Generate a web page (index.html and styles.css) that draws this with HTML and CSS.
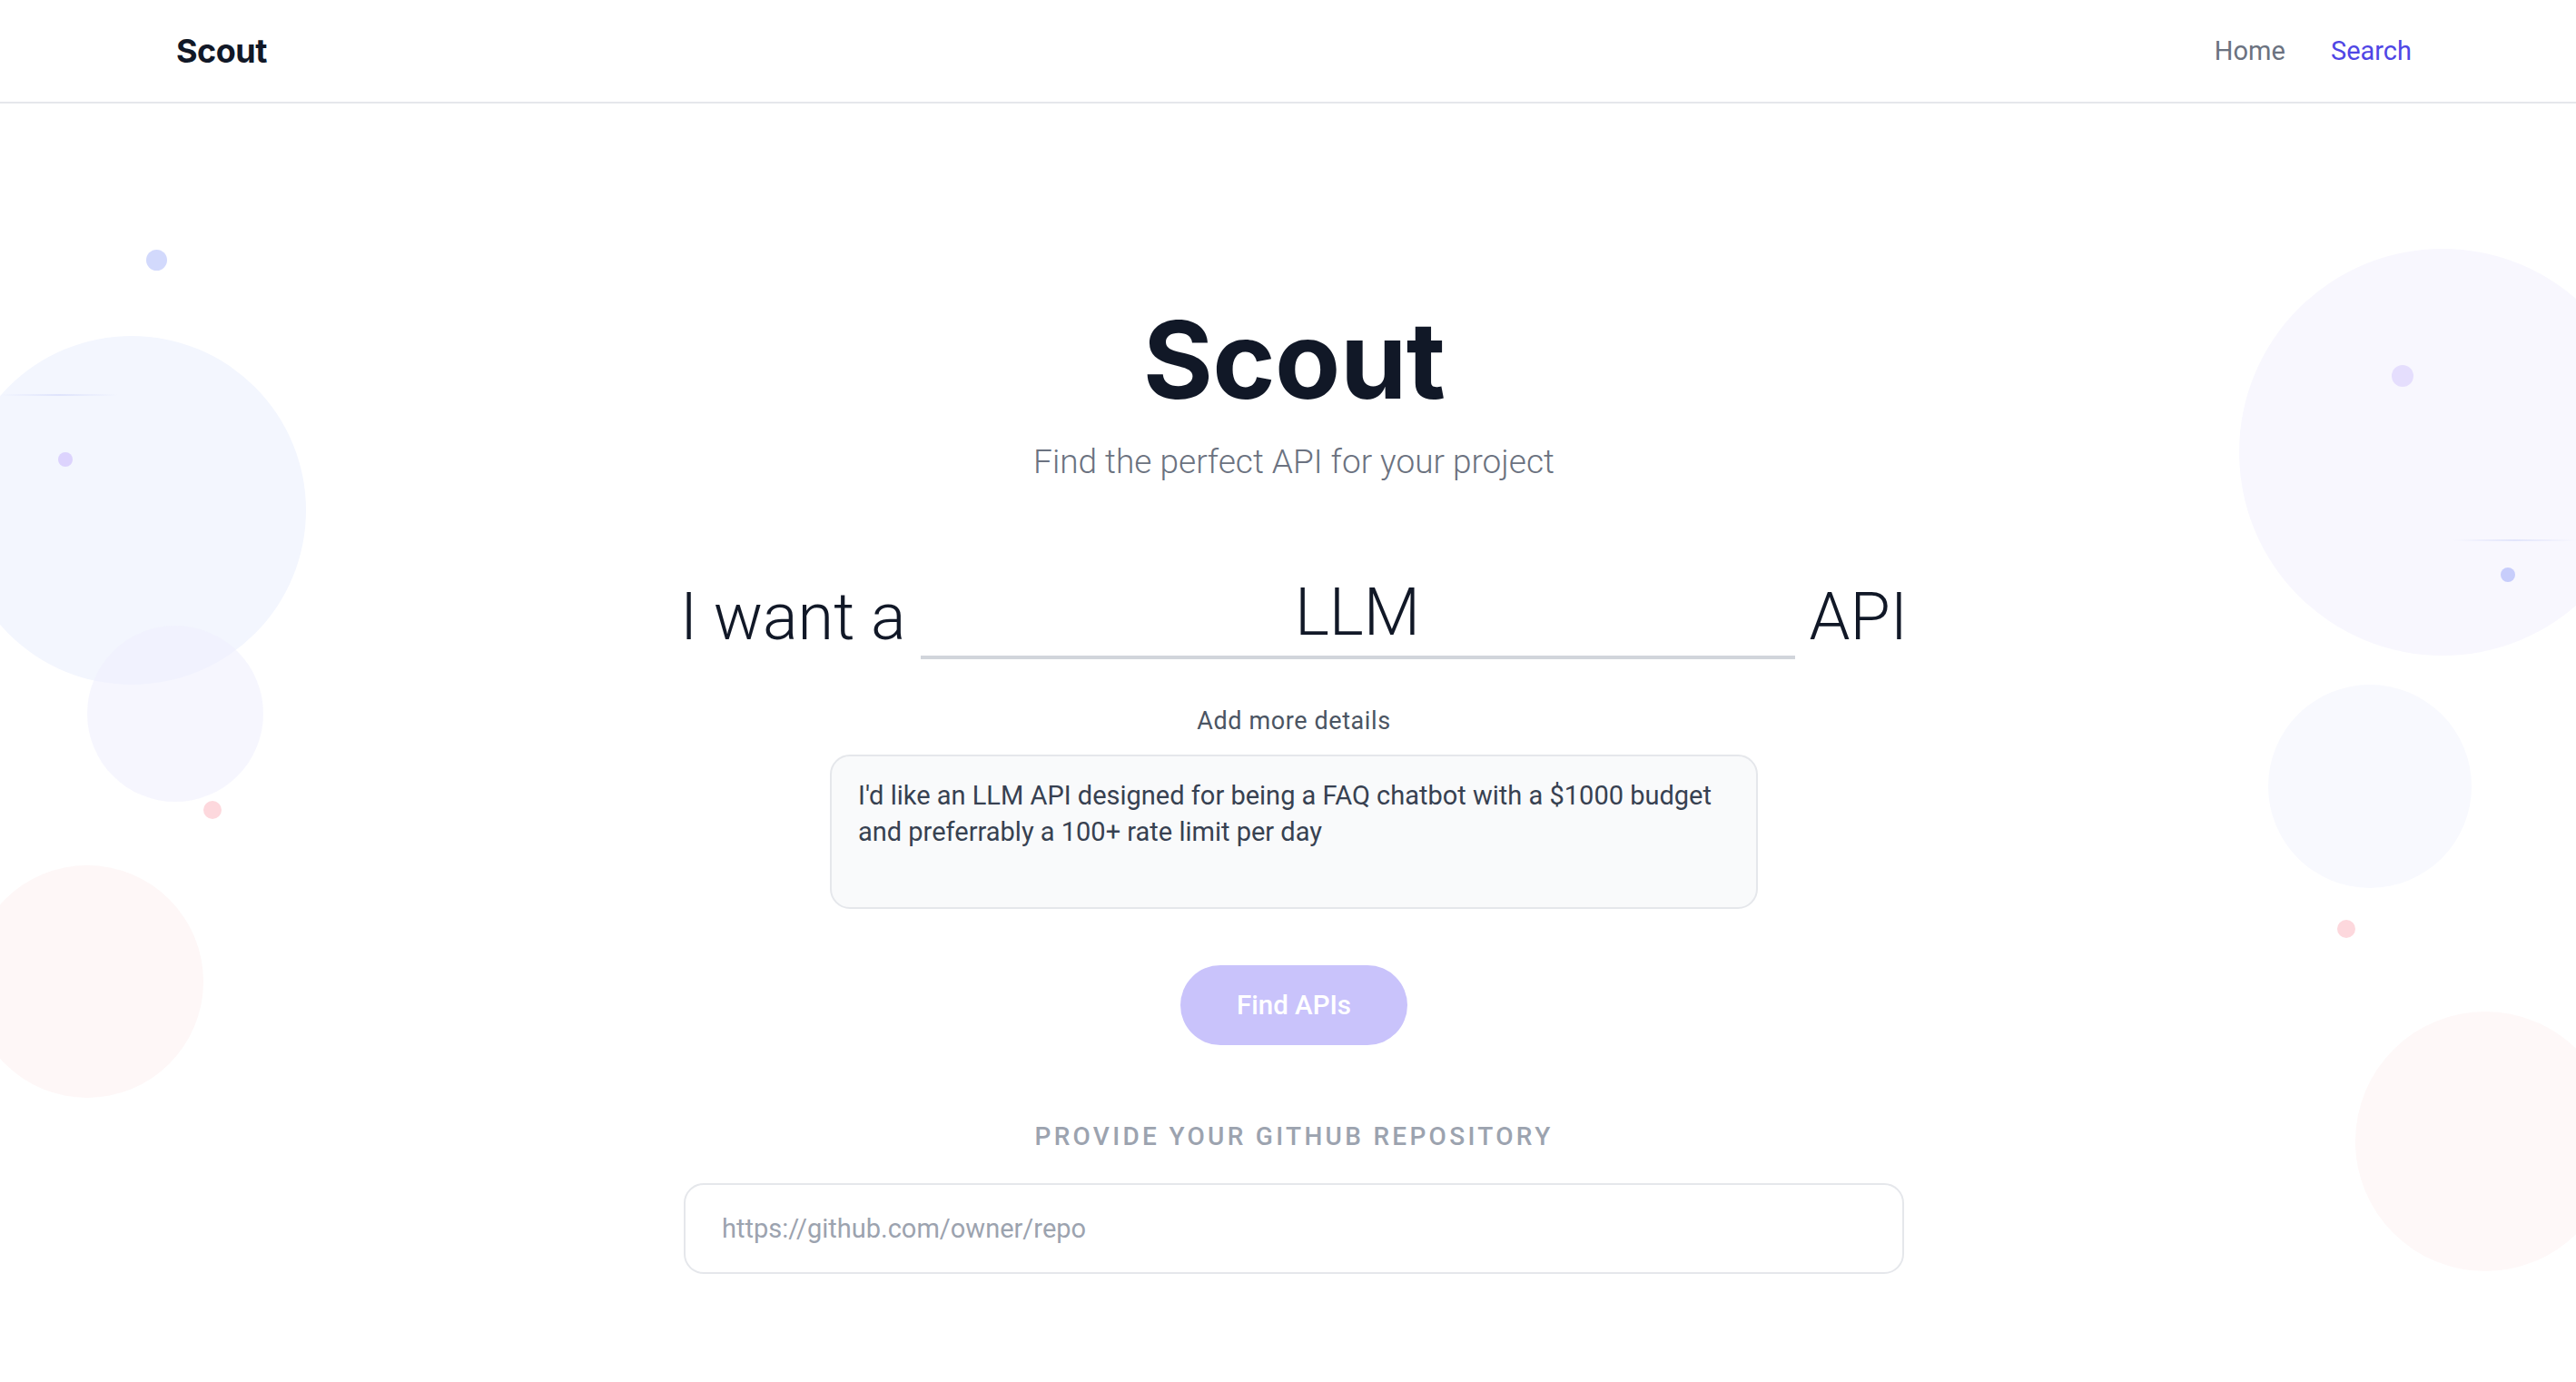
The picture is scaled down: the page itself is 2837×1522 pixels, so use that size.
FILE: index.html
```html
<!DOCTYPE html>
<html lang="en">
<head>
<meta charset="utf-8">
<title>Scout</title>
<link rel="stylesheet" href="styles.css">
</head>
<body>
<div class="decor" aria-hidden="true">
  <span class="blob blob-l1"></span>
  <span class="blob blob-l2"></span>
  <span class="blob blob-l3"></span>
  <span class="dot dot-l1"></span>
  <span class="dot dot-l2"></span>
  <span class="dot dot-l3"></span>
  <span class="streak streak-l"></span>
  <span class="blob blob-r1"></span>
  <span class="blob blob-r2"></span>
  <span class="blob blob-r3"></span>
  <span class="dot dot-r1"></span>
  <span class="dot dot-r2"></span>
  <span class="dot dot-r3"></span>
  <span class="streak streak-r"></span>
</div>
<header class="nav">
  <a class="brand" href="#">Scout</a>
  <nav class="links">
    <a class="link" href="#">Home</a>
    <a class="link active" href="#">Search</a>
  </nav>
</header>
<main class="main">
  <h1 class="title">Scout</h1>
  <p class="subtitle">Find the perfect API for your project</p>
  <div class="want-row">
    <span class="want-text">I want a</span>
    <input class="want-input" type="text" value="LLM">
    <span class="want-text">API</span>
  </div>
  <label class="details-label">Add more details</label>
  <textarea class="details">I'd like an LLM API designed for being a FAQ chatbot with a $1000 budget and preferrably a 100+ rate limit per day</textarea>
  <button class="find-btn" type="button">Find APIs</button>
  <div class="repo-label">Provide your GitHub repository</div>
  <input class="repo-input" type="text" placeholder="https://github.com/owner/repo">
</main>
</body>
</html>
```

FILE: styles.css
```css
* { box-sizing: border-box; }
html, body { margin: 0; padding: 0; }
body {
  font-family: Roboto, "Liberation Sans", sans-serif;
  color: #111827;
  background: #ffffff;
  min-height: 1522px;
  position: relative;
  overflow: hidden;
}

.decor { position: absolute; inset: 0; z-index: 0; pointer-events: none; }
.blob, .dot { position: absolute; border-radius: 50%; }
.blob-l1 { left: -47px; top: 370px; width: 384px; height: 384px; background: #f3f6fe; }
.blob-l2 { left: 96px; top: 689px; width: 194px; height: 194px; background: rgba(240, 240, 253, 0.6); }
.blob-l3 { left: -32px; top: 953px; width: 256px; height: 256px; background: #fef7f7; }
.dot-l1 { left: 161px; top: 275px; width: 23px; height: 23px; background: #d2d9fc; }
.dot-l2 { left: 64px; top: 498px; width: 16px; height: 16px; background: #dcd3fd; }
.dot-l3 { left: 224px; top: 882px; width: 20px; height: 20px; background: #fdd8dd; }
.streak { position: absolute; height: 2px; }
.streak-l { left: 0; top: 434px; width: 130px; background: linear-gradient(to right, rgba(199,210,254,0), #dfe4fc 50%, rgba(199,210,254,0)); }
.blob-r1 { left: 2466px; top: 274px; width: 448px; height: 448px; background: #f8f7fe; }
.blob-r2 { left: 2498px; top: 754px; width: 224px; height: 224px; background: #f8f9fe; }
.blob-r3 { left: 2594px; top: 1114px; width: 286px; height: 286px; background: #fef8f8; }
.dot-r1 { left: 2634px; top: 402px; width: 24px; height: 24px; background: #e5defd; }
.dot-r2 { left: 2754px; top: 625px; width: 16px; height: 16px; background: #c7cdfb; }
.dot-r3 { left: 2574px; top: 1013px; width: 20px; height: 20px; background: #fdd8dd; }
.streak-r { left: 2702px; top: 594px; width: 135px; background: linear-gradient(to right, rgba(199,210,254,0), #e2e5fb 50%, rgba(199,210,254,0)); }

.nav {
  position: relative;
  z-index: 1;
  height: 114px;
  border-bottom: 2px solid #e5e7eb;
  display: flex;
  align-items: center;
  justify-content: space-between;
  padding: 0 181px 0 194px;
}
.brand {
  font-family: Inter, Roboto, sans-serif;
  font-size: 36px;
  font-weight: 700;
  color: #111827;
  text-decoration: none;
  letter-spacing: -0.5px;
}
.links { display: flex; gap: 50px; }
.link {
  font-size: 29px;
  color: #6b7280;
  text-decoration: none;
}
.link.active { color: #4f46e5; }

.main {
  position: relative;
  z-index: 1;
  display: flex;
  flex-direction: column;
  align-items: center;
  padding: 223px 0 0 13px;
}
.title {
  margin: 0;
  font-family: Inter, Roboto, sans-serif;
  font-size: 118px;
  line-height: 1;
  font-weight: 700;
  letter-spacing: -0.6px;
  color: #111827;
}
.subtitle {
  margin: 27px 0 0;
  font-size: 37px;
  line-height: 54px;
  font-weight: 300;
  color: #6b7280;
}
.want-row {
  margin-top: 91px;
  display: flex;
  align-items: flex-end;
  gap: 16px;
}
.want-text {
  font-size: 72px;
  line-height: 72px;
  font-weight: 300;
  padding-bottom: 10px;
  color: #111827;
}
.want-input {
  width: 963px;
  font-family: inherit;
  font-size: 72px;
  font-weight: 300;
  line-height: normal;
  color: #111827;
  text-align: center;
  border: 0;
  border-bottom: 4px solid #d1d5db;
  background: transparent;
  padding: 5px 0 5px;
  outline: none;
}
.details-label {
  margin-top: 50px;
  font-size: 27px;
  line-height: 36px;
  letter-spacing: 0.6px;
  color: #4b5563;
}
.details {
  margin-top: 19px;
  width: 1022px;
  height: 170px;
  font-family: inherit;
  font-size: 29px;
  line-height: 40px;
  color: #374151;
  background: #f9fafb;
  border: 2px solid #e5e7eb;
  border-radius: 22px;
  padding: 23px 29px;
  resize: none;
  outline: none;
}
.find-btn {
  margin-top: 62px;
  height: 88px;
  padding: 0 62px;
  border: 0;
  border-radius: 44px;
  background: #c9c3fb;
  color: #ffffff;
  font-family: inherit;
  font-size: 29.5px;
  font-weight: 500;
}
.repo-label {
  margin-top: 83px;
  font-size: 28px;
  line-height: 36px;
  font-weight: 500;
  letter-spacing: 3.3px;
  text-transform: uppercase;
  color: #9ca3af;
}
.repo-input {
  margin-top: 33px;
  width: 1344px;
  height: 100px;
  font-family: inherit;
  font-size: 29px;
  color: #374151;
  background: #ffffff;
  border: 2px solid #e5e7eb;
  border-radius: 22px;
  padding: 0 40px;
  outline: none;
}
.repo-input::placeholder { color: #9ca3af; }
```
